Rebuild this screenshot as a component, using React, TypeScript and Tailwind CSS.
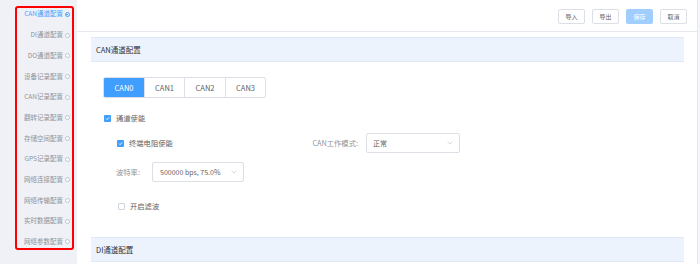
import React from "react";

const navItems = [
  "CAN通道配置",
  "DI通道配置",
  "DO通道配置",
  "设备记录配置",
  "CAN记录配置",
  "翻转记录配置",
  "存储空间配置",
  "GPS记录配置",
  "网络连接配置",
  "网络传输配置",
  "实时数据配置",
  "网络参数配置",
];

function Check({ checked }: { checked: boolean }) {
  return checked ? (
    <span className="flex h-[7px] w-[7px] items-center justify-center rounded-[1px] bg-[#409eff]">
      <svg width="5" height="5" viewBox="0 0 10 10">
        <path d="M2 5.2 L4.2 7.4 L8.2 2.8" fill="none" stroke="#fff" strokeWidth="1.8" />
      </svg>
    </span>
  ) : (
    <span className="h-[7px] w-[7px] rounded-[1px] border border-[#cfd3dc] bg-white" />
  );
}

function Chevron() {
  return (
    <svg width="6" height="4" viewBox="0 0 12 8">
      <path d="M1 1.5 L6 6 L11 1.5" fill="none" stroke="#c0c4cc" strokeWidth="1.3" />
    </svg>
  );
}

function Btn({ label, primary }: { label: string; primary?: boolean }) {
  return (
    <div
      className={
        primary
          ? "flex h-[15px] w-[27px] items-center justify-center rounded-[2px] bg-[#a0cfff] text-[6px] text-white"
          : "flex h-[15px] w-[27px] items-center justify-center rounded-[2px] border border-[#dcdfe6] bg-white text-[6px] text-[#606266]"
      }
    >
      {label}
    </div>
  );
}

export default function App() {
  return (
    <div className="flex h-[264px] w-[700px] overflow-hidden bg-white font-['Noto_Sans_CJK_SC','Noto_Sans',sans-serif]">
      <aside className="relative w-[77px] shrink-0 bg-[#eff1f6]">
        <ul className="pt-[4px]">
          {navItems.map((t, i) => (
            <li key={t} className="flex h-[20.7px] items-center justify-end gap-[1.5px] pr-[7.5px]">
              <span className={i === 0 ? "text-[6.5px] text-[#409eff]" : "text-[6.5px] text-[#909399]"}>{t}</span>
              {i === 0 ? (
                <span className="flex h-[5px] w-[5px] items-center justify-center rounded-full border border-[#409eff]">
                  <span className="h-[1.5px] w-[1.5px] rounded-full bg-[#409eff]" />
                </span>
              ) : (
                <span className="h-[5px] w-[5px] rounded-full border border-[#c0c4cc] bg-white" />
              )}
            </li>
          ))}
        </ul>
        <div className="absolute left-[15px] top-[6px] h-[244px] w-[59px] rounded-[3px] border-2 border-[#ff0000]" />
      </aside>

      <main className="flex min-w-0 flex-1 flex-col">
        <div className="flex h-[32px] shrink-0 items-start justify-end gap-[7px] border-b border-[#e6e9ef] pr-[10px] pt-[9px]">
          <Btn label="导入" />
          <Btn label="导出" />
          <Btn label="保存" primary />
          <Btn label="取消" />
        </div>

        <div className="flex flex-col px-[13px] pl-[14px]">
          <div className="mt-[5px] flex h-[25px] items-center border-y border-[#dfe8f4] bg-[#ecf3fd] pl-[5px] text-[7.5px] text-[#303133]">
            CAN通道配置
          </div>

          <div className="ml-[12px] mt-[15px] flex h-[21px] w-[163px] overflow-hidden rounded-[2px] border border-[#dcdfe6] text-[7.5px]">
            <div className="flex w-[40px] items-center justify-center bg-[#409eff] text-white">CAN0</div>
            <div className="flex w-[40px] items-center justify-center border-l border-[#dcdfe6] text-[#606266]">CAN1</div>
            <div className="flex w-[41px] items-center justify-center border-l border-[#dcdfe6] text-[#606266]">CAN2</div>
            <div className="flex flex-1 items-center justify-center border-l border-[#dcdfe6] text-[#606266]">CAN3</div>
          </div>

          <div className="ml-[13px] mt-[13px] flex h-[14px] items-center gap-[5px] text-[7.3px] text-[#606266]">
            <Check checked />
            <span>通道使能</span>
          </div>

          <div className="ml-[26px] mt-[8px] flex h-[20px] items-center">
            <div className="flex w-[183px] items-center gap-[5px] text-[7.3px] text-[#606266]">
              <Check checked />
              <span>终端电阻使能</span>
            </div>
            <div className="w-[58px] text-right text-[7.3px] text-[#909399]">CAN工作模式:</div>
            <div className="ml-[8px] flex h-[20px] w-[94px] items-center justify-between rounded-[2px] border border-[#dcdfe6] pl-[6px] pr-[6px] text-[7px] text-[#606266]">
              <span>正常</span>
              <Chevron />
            </div>
          </div>

          <div className="ml-[25px] mt-[9px] flex h-[20px] items-center">
            <div className="w-[36px] text-[7.3px] text-[#909399]">波特率:</div>
            <div className="flex h-[20px] w-[92px] items-center justify-between rounded-[2px] border border-[#dcdfe6] pl-[7px] pr-[6px] text-[7px] text-[#606266]">
              <span>500000 bps, 75.0%</span>
              <Chevron />
            </div>
          </div>

          <div className="ml-[27px] mt-[17px] flex h-[14px] items-center gap-[5px] text-[7.3px] text-[#606266]">
            <Check checked={false} />
            <span>开启滤波</span>
          </div>

          <div className="mt-[24px] flex h-[25px] items-center border-y border-[#dfe8f4] bg-[#ecf3fd] pl-[5px] text-[7.5px] text-[#303133]">
            DI通道配置
          </div>
        </div>
      </main>

      <div className="w-[3px] shrink-0 border-l border-[#e4e7ed] bg-[#f5f7fa]" />
    </div>
  );
}
